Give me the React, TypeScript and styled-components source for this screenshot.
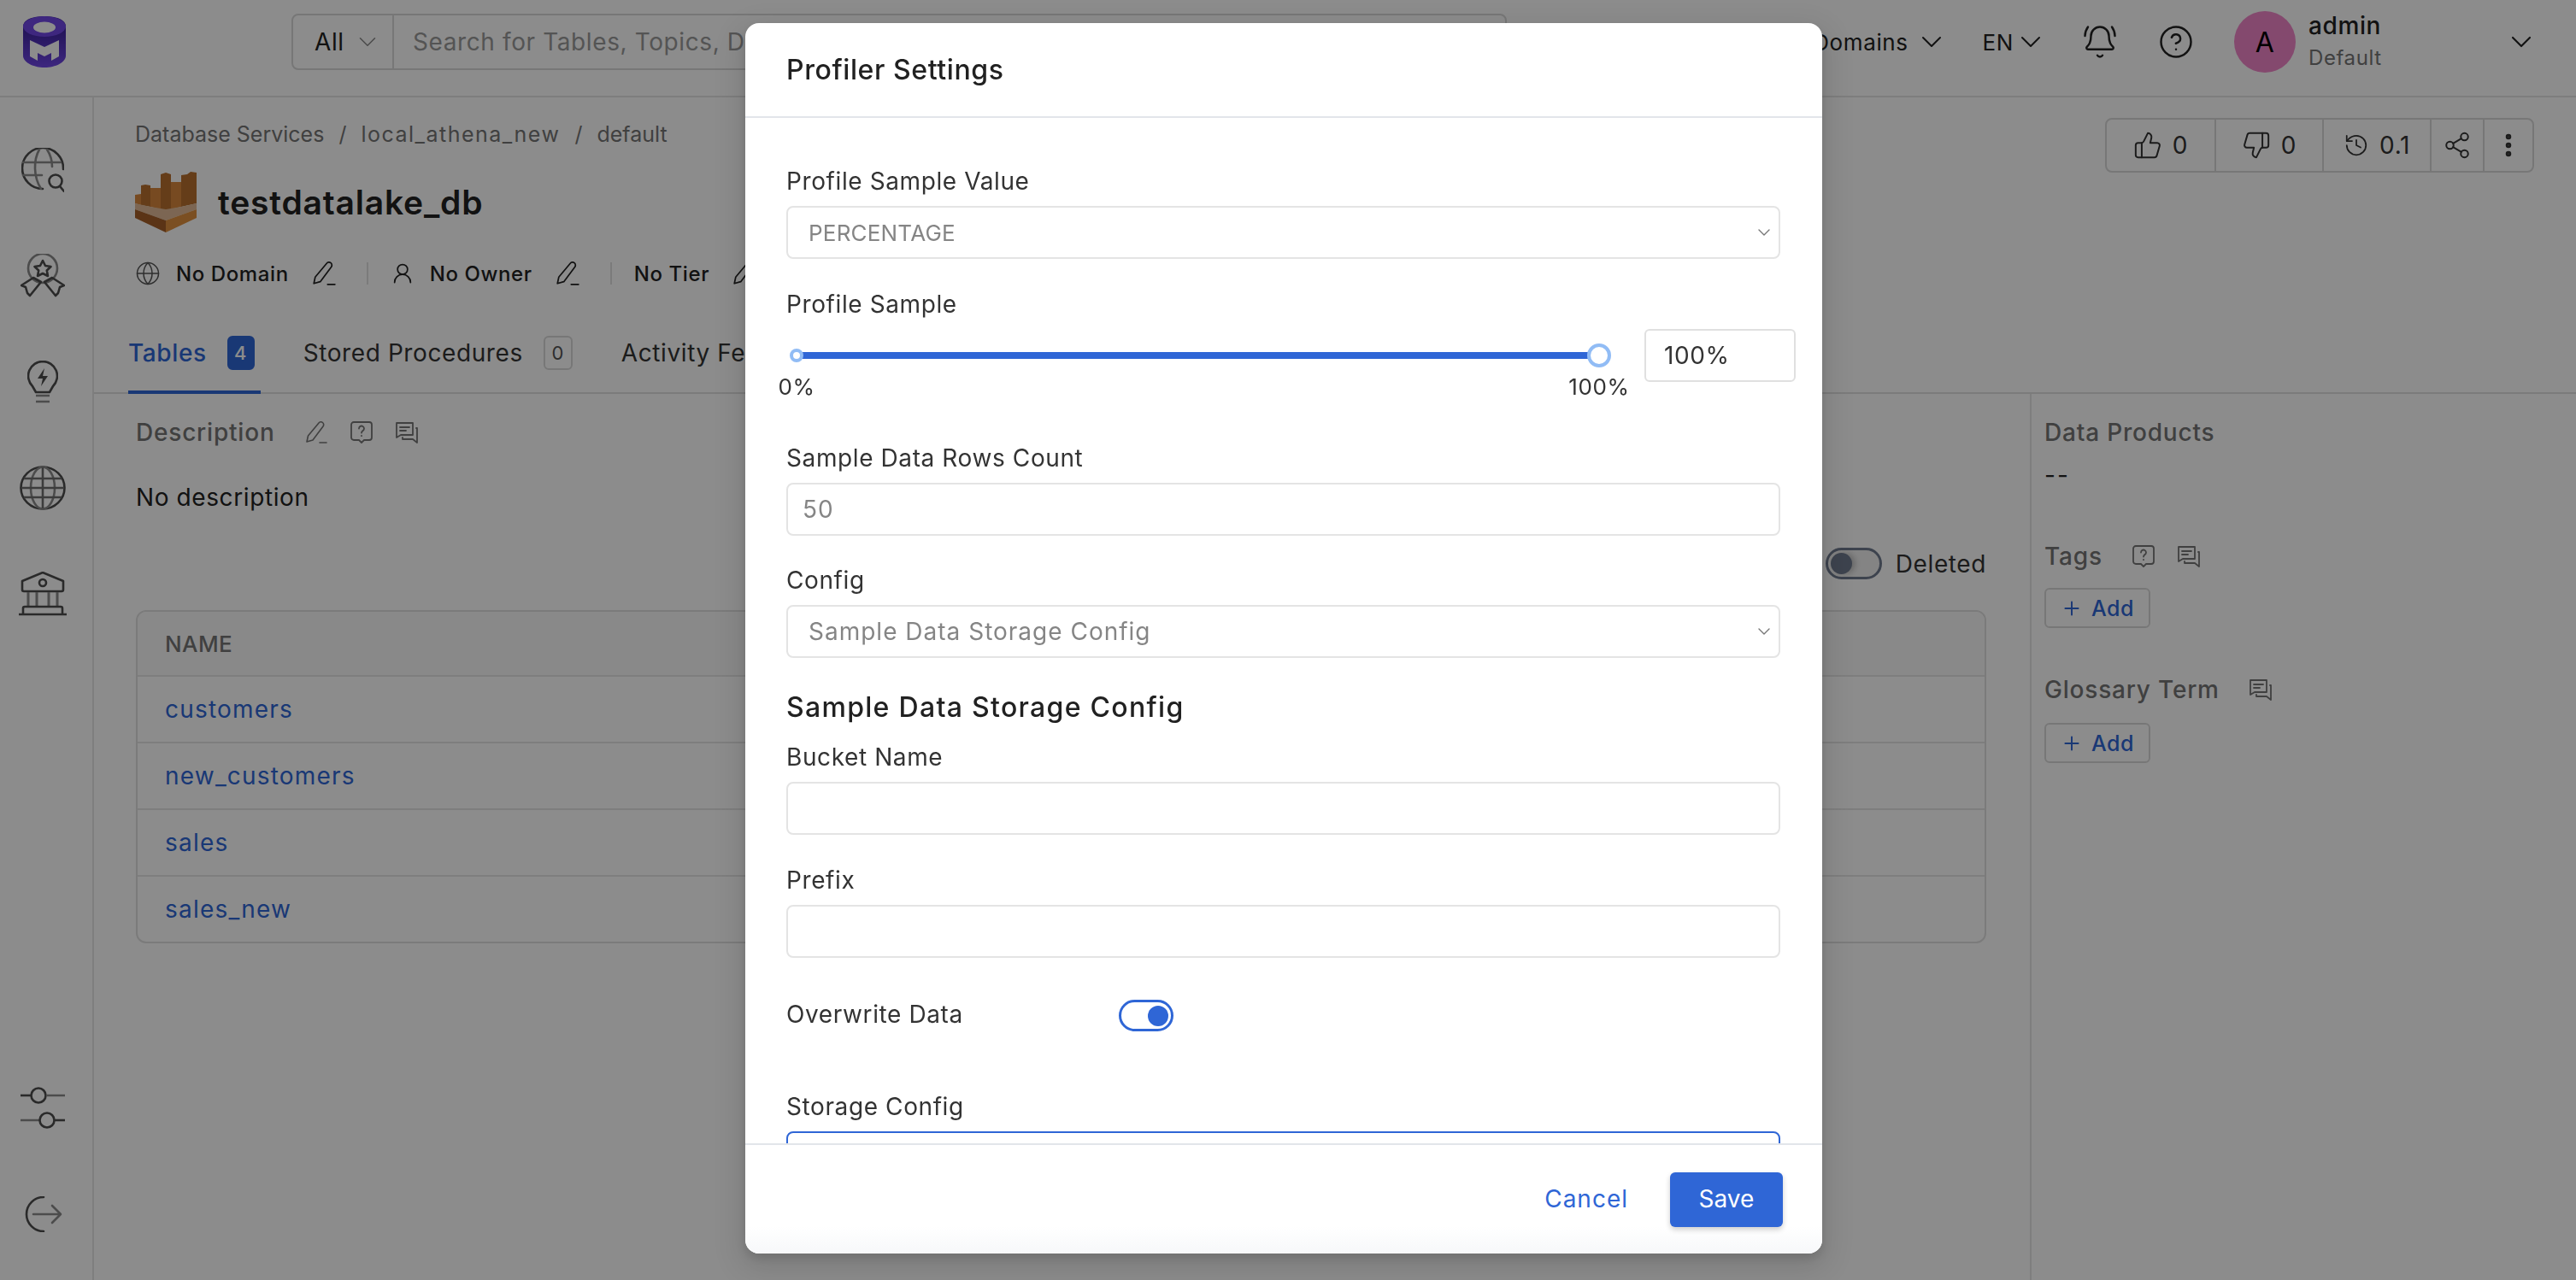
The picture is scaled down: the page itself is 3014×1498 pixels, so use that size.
import React from 'react';
import styled, {createGlobalStyle} from 'styled-components';
import {
  BellRing, ChevronDown, CircleHelp, EllipsisVertical, Globe, History, Plus, Share2, ThumbsDown, ThumbsUp, UserRound,
} from 'lucide-react';

const Global = createGlobalStyle`
  * { box-sizing: border-box; }
  html, body { margin: 0; height: 100%; }
  body {
    font-family: Inter, "Noto Sans", "Liberation Sans", sans-serif;
    font-size: 28px;
    letter-spacing: 0.6px;
    color: #212121;
    background: #fff;
    overflow: hidden;
  }
`;

const Page = styled.div`
  height: 1498px;
  display: flex;
  flex-direction: column;
`;

const Header = styled.header`
  height: 114px;
  flex: none;
  display: flex;
  align-items: center;
  padding: 0 44px 14px 27px;
  border-bottom: 2px solid #e6e6e6;
`;

const Search = styled.div`
  width: 1422px;
  height: 66px;
  margin-left: 264px;
  display: flex;
  align-items: center;
  border: 2px solid #d9d9d9;
  border-radius: 8px;
  > .scope {
    width: 118px;
    height: 100%;
    display: flex;
    align-items: center;
    gap: 10px;
    padding-left: 25px;
    border-right: 2px solid #d9d9d9;
  }
  > .placeholder {
    padding-left: 22px;
    color: #9a9a9a;
    white-space: nowrap;
  }
`;

const HeaderRight = styled.div`
  margin-left: auto;
  display: flex;
  align-items: center;
  gap: 40px;
`;

const HeaderMenu = styled.div<{$gap: number}>`
  display: flex;
  align-items: center;
  gap: ${p => p.$gap}px;
  font-size: 26px;
`;

const HeaderIcon = styled.span`
  width: 42px;
  height: 42px;
  margin-right: 7px;
  display: flex;
`;

const User = styled.div`
  width: 356px;
  display: flex;
  align-items: center;
  gap: 15px;
  > .chev { margin-left: auto; }
`;

const Avatar = styled.div`
  width: 72px;
  height: 72px;
  border-radius: 50%;
  background: #f085c8;
  color: #000;
  font-size: 32px;
  display: flex;
  align-items: center;
  justify-content: center;
`;

const UserName = styled.div`
  display: flex;
  flex-direction: column;
  gap: 4px;
  line-height: 34px;
  font-weight: 500;
  > small {
    font-size: 24px;
    font-weight: 400;
    color: #757575;
  }
`;

const Body = styled.div`
  flex: 1;
  display: flex;
  min-height: 0;
`;

const Sidebar = styled.nav`
  width: 110px;
  flex: none;
  display: flex;
  flex-direction: column;
  justify-content: space-between;
  padding: 23px 0 15px;
  border-right: 2px solid #e6e6e6;
`;

const SideGroup = styled.div`
  display: flex;
  flex-direction: column;
`;

const SideSlot = styled.div`
  height: 124px;
  display: flex;
  align-items: center;
  justify-content: center;
  padding-right: 8px;
`;

const Main = styled.main`
  flex: 1;
  min-width: 0;
  display: flex;
  flex-direction: column;
`;

const EntityHeader = styled.div`
  display: flex;
  justify-content: space-between;
  align-items: flex-start;
  padding: 25px 49px 0 48px;
`;

const Breadcrumb = styled.div`
  height: 36px;
  display: flex;
  align-items: center;
  gap: 17px;
  font-size: 25px;
  color: #757575;
  letter-spacing: 0;
`;

const Crumb = styled.span<{$wide?: boolean}>`
  letter-spacing: ${p => (p.$wide ? 1.5 : 0)}px;
`;

const TitleRow = styled.div`
  margin-top: 25px;
  display: flex;
  align-items: center;
  gap: 25px;
  height: 72px;
  > h1 {
    margin: 0;
    font-size: 39px;
    font-weight: 600;
    letter-spacing: 0.8px;
  }
`;

const MetaRow = styled.div`
  margin-top: 30px;
  height: 36px;
  display: flex;
  align-items: center;
  font-size: 24px;
  font-weight: 500;
`;

const MetaItem = styled.div`
  display: flex;
  align-items: center;
  gap: 18px;
  & + &::before {
    content: '';
    width: 2px;
    height: 26px;
    margin: 0 8px 0 35px;
    background: #e0e0e0;
  }
  > .edit { margin-left: 8px; display: flex; }
`;

const ActionGroup = styled.div`
  margin-top: -1px;
  height: 64px;
  display: flex;
  border: 2px solid #d9d9d9;
  border-radius: 8px;
  color: #333;
`;

const Action = styled.div<{$w: number}>`
  width: ${p => p.$w}px;
  display: flex;
  align-items: center;
  justify-content: center;
  gap: 12px;
  font-size: 28px;
  & + & { border-left: 2px solid #d9d9d9; }
`;

const TabBar = styled.div`
  margin-top: 28px;
  height: 95px;
  display: flex;
  gap: 50px;
  padding-left: 40px;
  border-bottom: 2px solid #e0e0e0;
`;

const Tab = styled.div<{$active?: boolean}>`
  display: flex;
  align-items: center;
  gap: 24px;
  padding: 2px 7px 0 0;
  margin-bottom: -2px;
  color: ${p => (p.$active ? '#2f66d6' : '#333')};
  font-weight: ${p => (p.$active ? 500 : 400)};
  border-bottom: 4px solid ${p => (p.$active ? '#2f66d6' : 'transparent')};
`;

const TabCount = styled.span<{$active?: boolean}>`
  width: ${p => (p.$active ? 32 : 34)}px;
  height: 40px;
  display: flex;
  align-items: center;
  justify-content: center;
  border-radius: 6px;
  font-size: 22px;
  color: ${p => (p.$active ? '#fff' : '#555')};
  background: ${p => (p.$active ? '#2f66d6' : 'transparent')};
  border: 2px solid ${p => (p.$active ? '#2f66d6' : '#d9d9d9')};
`;

const Content = styled.div`
  flex: 1;
  display: flex;
  min-height: 0;
`;

const Left = styled.section`
  flex: 1;
  min-width: 0;
  padding: 27px 51px 0 49px;
`;

const SectionTitle = styled.div`
  height: 36px;
  display: flex;
  align-items: center;
  color: #757575;
  font-weight: 500;
  font-size: 28px;
  letter-spacing: 0.8px;
`;

const TitleIcons = styled.span<{$offset: number}>`
  margin-left: ${p => p.$offset}px;
  display: flex;
  gap: 25px;
  color: #757575;
`;

const Paragraph = styled.div`
  margin-top: 40px;
  height: 36px;
  line-height: 36px;
`;

const DeletedRow = styled.div`
  margin-top: 41px;
  display: flex;
  justify-content: flex-end;
  align-items: center;
  gap: 16px;
  color: #333;
`;

const DeletedSwitch = styled.div`
  width: 66px;
  height: 37px;
  padding: 3px;
  border: 3px solid #6f7a8f;
  border-radius: 19px;
  background: #f0f0f0;
  > i {
    display: block;
    width: 25px;
    height: 25px;
    border-radius: 50%;
    background: #6f7a8f;
    box-shadow: 4px 0 6px rgba(0, 0, 0, 0.2);
  }
`;

const Table = styled.div`
  margin-top: 36px;
  border: 2px solid #e0e0e0;
  border-radius: 12px;
  overflow: hidden;
`;

const TableRow = styled.div<{$head?: boolean}>`
  height: ${p => (p.$head ? 74 : 78)}px;
  display: flex;
  align-items: center;
  padding-left: 32px;
  letter-spacing: ${p => (p.$head ? 0.4 : 1.2)}px;
  color: ${p => (p.$head ? '#757575' : '#2f66d6')};
  background: ${p => (p.$head ? '#fafafa' : 'transparent')};
  font-weight: ${p => (p.$head ? 500 : 400)};
  font-size: ${p => (p.$head ? 26 : 28)}px;
  & + & { border-top: 2px solid #e6e6e6; }
`;

const Aside = styled.aside`
  width: 639px;
  flex: none;
  padding: 27px 0 0 15px;
  border-left: 2px solid #e6e6e6;
`;

const AsideValue = styled.div<{$below: number}>`
  margin: 14px 0 ${p => p.$below}px;
  height: 36px;
  line-height: 36px;
  letter-spacing: 2px;
`;

const AddButton = styled.div<{$top: number; $below?: number}>`
  margin: ${p => p.$top}px 0 ${p => p.$below || 0}px;
  width: 124px;
  height: 47px;
  display: flex;
  align-items: center;
  justify-content: center;
  gap: 10px;
  border: 2px solid #d9d9d9;
  border-radius: 6px;
  color: #2f66d6;
  font-size: 25px;
  font-weight: 500;
`;

const Overlay = styled.div`
  position: fixed;
  inset: 0;
  background: rgba(0, 0, 0, 0.45);
`;

const Modal = styled.div`
  position: absolute;
  left: 872px;
  top: 27px;
  width: 1260px;
  height: 1440px;
  display: flex;
  flex-direction: column;
  background: #fff;
  border-radius: 16px;
  overflow: hidden;
  box-shadow: 0 12px 32px 8px rgba(0, 0, 0, 0.1), 0 6px 12px rgba(0, 0, 0, 0.12);
`;

const ModalHeader = styled.div`
  flex: none;
  height: 111px;
  display: flex;
  align-items: center;
  padding-left: 48px;
  border-bottom: 2px solid #e2e5ea;
  font-size: 32px;
  font-weight: 500;
`;

const ModalBody = styled.div`
  flex: 1;
  min-height: 0;
  overflow: hidden;
  padding: 53px 49px 0 48px;
`;

const Label = styled.div`
  height: 42px;
  line-height: 42px;
  margin-bottom: 8px;
  color: #333;
`;

const Field = styled.div<{$below?: number}>`
  margin-bottom: ${p => p.$below ?? 32}px;
`;

const Control = styled.div<{$focus?: boolean; $muted?: boolean; $pad?: number; $caps?: boolean}>`
  height: 62px;
  display: flex;
  align-items: center;
  justify-content: space-between;
  padding: 0 5px 0 ${p => p.$pad ?? 24}px;
  background: #fff;
  border: 2px solid ${p => (p.$focus ? '#2f66d6' : '#e4e4e4')};
  border-radius: 8px;
  color: ${p => (p.$muted ? '#858585' : '#333')};
  font-size: ${p => (p.$caps ? 26 : 28)}px;
  letter-spacing: ${p => (p.$caps ? 0.2 : 1)}px;
`;

const SliderRow = styled.div`
  display: flex;
  align-items: flex-start;
  margin-right: -18px;
`;

const Slider = styled.div`
  position: relative;
  width: 939px;
  height: 62px;
  margin: 0 53px 0 12px;
  flex: none;
`;

const Track = styled.div`
  position: absolute;
  left: 0;
  right: 0;
  top: 27px;
  height: 8px;
  background: #2f66d6;
`;

const Handle = styled.span<{$size: number; $left: string}>`
  position: absolute;
  top: ${p => 31 - p.$size / 2}px;
  left: ${p => p.$left};
  width: ${p => p.$size}px;
  height: ${p => p.$size}px;
  margin-left: ${p => -p.$size / 2}px;
  background: #fff;
  border: 4px solid #91bcf5;
  border-radius: 50%;
`;

const Mark = styled.span<{$left: string}>`
  position: absolute;
  top: 50px;
  left: ${p => p.$left};
  transform: translateX(-50%);
  font-size: 26px;
  line-height: 36px;
  color: #333;
`;

const PercentBox = styled.div`
  width: 177px;
  height: 62px;
  display: flex;
  align-items: center;
  padding-left: 21px;
  border: 2px solid #e0e0e0;
  border-radius: 6px;
  color: #333;
`;

const FormHeading = styled.div`
  height: 46px;
  line-height: 46px;
  margin: 35px 0 14px;
  font-size: 32px;
  font-weight: 500;
  letter-spacing: 1.3px;
`;

const SwitchRow = styled.div`
  height: 37px;
  margin: 49px 0 67px;
  display: flex;
  align-items: center;
  color: #333;
  > span { width: 389px; margin-top: -3px; }
`;

const Switch = styled.div`
  width: 64px;
  height: 37px;
  display: flex;
  justify-content: flex-end;
  align-items: center;
  padding-right: 3px;
  border: 3px solid #2f66d6;
  border-radius: 19px;
  > i {
    width: 24px;
    height: 24px;
    border-radius: 50%;
    background: #2f66d6;
  }
`;

const ModalFooter = styled.div`
  flex: none;
  height: 129px;
  display: flex;
  align-items: center;
  justify-content: flex-end;
  gap: 49px;
  padding-right: 46px;
  border-top: 2px solid #e2e5ea;
  background: linear-gradient(#fff 75%, #f7f8fa);
`;

const CancelButton = styled.button`
  padding: 0 0 2px;
  border: 0;
  background: none;
  font: inherit;
  letter-spacing: 1px;
  color: #2f66d6;
`;

const SaveButton = styled.button`
  width: 132px;
  height: 64px;
  padding: 0 0 2px;
  border: 0;
  border-radius: 6px;
  background: #2f66d6;
  color: #fff;
  font: inherit;
  box-shadow: 0 3px 6px rgba(0, 0, 0, 0.2);
`;

const Logo = () => (
  <svg width="50" height="60" viewBox="0 0 50 60">
    <defs>
      <linearGradient id="logoBody" x1="0" y1="0" x2="0" y2="1">
        <stop offset="0.25" stopColor="#3f25a0"/>
        <stop offset="1" stopColor="#7147e8"/>
      </linearGradient>
    </defs>
    <path d="M0 12C0 4 11 0 25 0s25 4 25 12v34c0 8-12 14-25 14S0 54 0 46z" fill="url(#logoBody)"/>
    <ellipse cx="25" cy="12" rx="25" ry="12" fill="#7147e8"/>
    <ellipse cx="25" cy="13" rx="13" ry="6.500" fill="#fff"/>
    <path d="M8 28l17 8 17-8v19l-9 5v-9l-8 4-8-4v9l-9-5z" fill="#fff"/>
  </svg>
);

const Athena = () => (
  <svg width="72" height="72" viewBox="0 0 72 72">
    <path d="M0 28l7-1v13l-7-2z" fill="#d9873c"/>
    <path d="M7 17l5-1 6 1v25l-11-2z" fill="#b8702e"/>
    <path d="M18 20h12v25l-12-3z" fill="#d9873c"/>
    <path d="M30 4l6-2 6 2v41H30z" fill="#b8702e"/>
    <path d="M42 13h12v29l-12 3z" fill="#d9873c"/>
    <path d="M54 5l7-1 4-3 7 1v36l-18 4z" fill="#b8702e"/>
    <path d="M0 38l18 4 18 3 18-3 18-4v7L36 58 0 45z" fill="#e2bb97"/>
    <path d="M0 45l36 13v14L0 55z" fill="#a65f28"/>
    <path d="M72 45L36 58v14l36-17z" fill="#e0913f"/>
  </svg>
);

const Pencil = ({size = 30}: {size?: number}) => (
  <svg width={size} height={size} viewBox="0 0 28 28" fill="none" stroke="currentColor" strokeWidth="1.600" strokeLinejoin="round" strokeLinecap="round">
    <path d="M3 25l1.500-7L17 3a3 3 0 0 1 5 4L10 23z"/>
    <path d="M18 26h8"/>
  </svg>
);

const AskBubble = () => (
  <svg width="28" height="28" viewBox="0 0 28 28" fill="none" stroke="currentColor" strokeWidth="1.800" strokeLinecap="round" strokeLinejoin="round">
    <path d="M5 2h18a3 3 0 0 1 3 3v15a3 3 0 0 1-3 3h-6l-3 3-3-3H5a3 3 0 0 1-3-3V5a3 3 0 0 1 3-3z"/>
    <path d="M11 9.500a3 3 0 1 1 4.500 2.600c-1 .6-1.500 1.200-1.500 2.400"/>
    <path d="M14 18v.2"/>
  </svg>
);

const Chat = () => (
  <svg width="28" height="28" viewBox="0 0 28 28" fill="none" stroke="currentColor" strokeWidth="1.800" strokeLinecap="round" strokeLinejoin="round">
    <path d="M2 3h19v14H7l-5 3z"/>
    <path d="M6 8h11M6 12h7"/>
    <path d="M25 9h1v17l-5-4H9v-2"/>
  </svg>
);

const IconExplore = () => (
  <svg width="50" height="52" viewBox="0 0 50 52" fill="none" stroke="#4d4d4d" strokeWidth="2.600" strokeLinecap="round">
    <path d="M49 25A24 24 0 1 0 25 48"/>
    <path d="M2 17h44M2 32h22M21 2c-7 12-7 32 2 46M30 2c4 6 6 12 6 20" stroke="#8a8a8a"/>
    <circle cx="40" cy="39" r="7.500"/>
    <path d="M45 45l5 6"/>
  </svg>
);

const IconBadge = () => (
  <svg width="52" height="52" viewBox="0 0 52 52" fill="none" stroke="#4d4d4d" strokeWidth="2.600" strokeLinejoin="round">
    <circle cx="26" cy="17" r="17" stroke="#8a8a8a"/>
    <path d="M26 8l3 6 6.500 1-4.700 4.500 1.200 6.500-6-3-6 3 1.200-6.500L16.500 15l6.500-1z"/>
    <path d="M15 28L1 37l5 2 2 7 3 3 13-16zM37 28l14 9-5 2-2 7-3 3-13-16z"/>
  </svg>
);

const IconInsight = () => (
  <svg width="36" height="50" viewBox="0 0 36 50" fill="none" stroke="#4d4d4d" strokeWidth="2.600" strokeLinejoin="round">
    <path d="M18 1a17 17 0 0 0-12 29l4 7h16l4-7A17 17 0 0 0 18 1z"/>
    <path d="M20 9l-8 12h6l-2 9 8-12h-6z" fill="#4d4d4d" stroke="none"/>
    <path d="M10 41h16M10 48h16" stroke="#8a8a8a"/>
  </svg>
);

const IconDomain = () => (
  <svg width="54" height="52" viewBox="0 0 54 52" fill="none" stroke="#4d4d4d" strokeWidth="2.600">
    <ellipse cx="27" cy="26" rx="25.500" ry="24.500"/>
    <ellipse cx="27" cy="26" rx="14" ry="24.500" stroke="#8a8a8a"/>
    <path d="M27 2v48M2 26h50M5 15h44M5 37h44" stroke="#6e6e6e"/>
  </svg>
);

const IconGovern = () => (
  <svg width="56" height="52" viewBox="0 0 56 52" fill="none" stroke="#4d4d4d" strokeWidth="2.600" strokeLinejoin="round">
    <path d="M28 1L4 11v10a2 2 0 0 0 2 2h44a2 2 0 0 0 2-2V11z"/>
    <circle cx="28" cy="13" r="4"/>
    <path d="M11 24v16M21 24v16M35 24v16M45 24v16" stroke="#8a8a8a" strokeWidth="3"/>
    <path d="M5 50v-7a2 2 0 0 1 2-2h42a2 2 0 0 1 2 2v7M0 50h56"/>
  </svg>
);

const IconSettings = () => (
  <svg width="54" height="50" viewBox="0 0 54 50" fill="none" strokeWidth="2.600">
    <path d="M1 10h13" stroke="#4d4d4d"/>
    <circle cx="22" cy="10" r="8.500" stroke="#4d4d4d"/>
    <path d="M31 10h22M1 39h22" stroke="#8a8a8a"/>
    <circle cx="32" cy="39" r="8.500" stroke="#4d4d4d"/>
    <path d="M41 39h12" stroke="#4d4d4d"/>
  </svg>
);

const IconLogout = () => (
  <svg width="46" height="42" viewBox="0 0 46 42" fill="none" strokeWidth="2.600" strokeLinecap="round" strokeLinejoin="round">
    <path d="M24 1A20 20 0 0 0 24 41" stroke="#4d4d4d"/>
    <path d="M12 21h32M34 11l10 10-10 10" stroke="#8a8a8a"/>
  </svg>
);

const sideTop = [IconExplore, IconBadge, IconInsight, IconDomain, IconGovern];
const sideBottom = [IconSettings, IconLogout];
const tables = ['customers', 'new_customers', 'sales', 'sales_new'];

const App: React.FC = () => {
  return (
    <Page>
      <Global/>
      <Header>
        <Logo/>
        <Search>
          <div className="scope">All <ChevronDown size={34} strokeWidth={1.100} color="#8a8a8a"/></div>
          <div className="placeholder">Search for Tables, Topics, Dashboards, Pipelines and ML Models</div>
        </Search>
        <HeaderRight>
          <HeaderMenu $gap={7}>All Domains <ChevronDown size={40} strokeWidth={1.200}/></HeaderMenu>
          <HeaderMenu $gap={0}>EN <ChevronDown size={40} strokeWidth={1.200}/></HeaderMenu>
          <HeaderIcon><BellRing size={42} strokeWidth={1.400}/></HeaderIcon>
          <HeaderIcon><CircleHelp size={42} strokeWidth={1.400}/></HeaderIcon>
          <User>
            <Avatar>A</Avatar>
            <UserName>admin<small>Default</small></UserName>
            <ChevronDown className="chev" size={40} strokeWidth={1.300}/>
          </User>
        </HeaderRight>
      </Header>
      <Body>
        <Sidebar>
          <SideGroup>
            {sideTop.map((Icon, i) => <SideSlot key={i}><Icon/></SideSlot>)}
          </SideGroup>
          <SideGroup>
            {sideBottom.map((Icon, i) => <SideSlot key={i}><Icon/></SideSlot>)}
          </SideGroup>
        </Sidebar>
        <Main>
          <EntityHeader>
            <div>
              <Breadcrumb>
                <Crumb>Database Services</Crumb><span>/</span>
                <Crumb $wide>local_athena_new</Crumb><span>/</span>
                <Crumb>default</Crumb>
              </Breadcrumb>
              <TitleRow>
                <Athena/>
                <h1>testdatalake_db</h1>
              </TitleRow>
              <MetaRow>
                <MetaItem><Globe size={30} strokeWidth={1.200} color="#555"/>No Domain<span className="edit"><Pencil/></span></MetaItem>
                <MetaItem><UserRound size={28} strokeWidth={1.500}/>No Owner<span className="edit"><Pencil/></span></MetaItem>
                <MetaItem>No Tier<span className="edit"><Pencil/></span></MetaItem>
              </MetaRow>
            </div>
            <ActionGroup>
              <Action $w={126}><ThumbsUp size={34} strokeWidth={1.400}/>0</Action>
              <Action $w={126}><ThumbsDown size={34} strokeWidth={1.400}/>0</Action>
              <Action $w={126}><History size={30} strokeWidth={1.400}/>0.1</Action>
              <Action $w={62}><Share2 size={34} strokeWidth={1.400}/></Action>
              <Action $w={58}><EllipsisVertical size={34} strokeWidth={2.600}/></Action>
            </ActionGroup>
          </EntityHeader>
          <TabBar>
            <Tab $active>Tables <TabCount $active>4</TabCount></Tab>
            <Tab>Stored Procedures <TabCount>0</TabCount></Tab>
            <Tab>Activity Feeds &amp; Tasks <TabCount>0</TabCount></Tab>
          </TabBar>
          <Content>
            <Left>
              <SectionTitle>
                Description
                <TitleIcons $offset={34}><Pencil size={28}/><AskBubble/><Chat/></TitleIcons>
              </SectionTitle>
              <Paragraph>No description</Paragraph>
              <DeletedRow><DeletedSwitch><i/></DeletedSwitch>Deleted</DeletedRow>
              <Table>
                <TableRow $head>NAME</TableRow>
                {tables.map(t => <TableRow key={t}>{t}</TableRow>)}
              </Table>
            </Left>
            <Aside>
              <SectionTitle>Data Products</SectionTitle>
              <AsideValue $below={59}>--</AsideValue>
              <SectionTitle>
                Tags
                <TitleIcons $offset={34}><AskBubble/><Chat/></TitleIcons>
              </SectionTitle>
              <AddButton $top={19} $below={54}><Plus size={26} strokeWidth={1.800}/>Add</AddButton>
              <SectionTitle>
                Glossary Term
                <TitleIcons $offset={34}><Chat/></TitleIcons>
              </SectionTitle>
              <AddButton $top={21}><Plus size={26} strokeWidth={1.800}/>Add</AddButton>
            </Aside>
          </Content>
        </Main>
      </Body>
      <Overlay/>
      <Modal>
        <ModalHeader>Profiler Settings</ModalHeader>
        <ModalBody>
          <Field>
            <Label>Profile Sample Value</Label>
            <Control $muted $caps>PERCENTAGE <ChevronDown size={24} strokeWidth={1.400} color="#777"/></Control>
          </Field>
          <Field $below={68}>
            <Label>Profile Sample</Label>
            <SliderRow>
              <Slider>
                <Track/>
                <Handle $size={16} $left="0%"/>
                <Handle $size={28} $left="100%"/>
                <Mark $left="0%">0%</Mark>
                <Mark $left="100%">100%</Mark>
              </Slider>
              <PercentBox>100%</PercentBox>
            </SliderRow>
          </Field>
          <Field $below={31}>
            <Label>Sample Data Rows Count</Label>
            <Control $muted $pad={17}>50</Control>
          </Field>
          <Field $below={0}>
            <Label>Config</Label>
            <Control $muted>Sample Data Storage Config <ChevronDown size={24} strokeWidth={1.400} color="#777"/></Control>
          </Field>
          <FormHeading>Sample Data Storage Config</FormHeading>
          <Field>
            <Label>Bucket Name</Label>
            <Control/>
          </Field>
          <Field $below={0}>
            <Label>Prefix</Label>
            <Control/>
          </Field>
          <SwitchRow>
            <span>Overwrite Data</span>
            <Switch><i/></Switch>
          </SwitchRow>
          <Field>
            <Label>Storage Config</Label>
            <Control $focus/>
          </Field>
        </ModalBody>
        <ModalFooter>
          <CancelButton>Cancel</CancelButton>
          <SaveButton>Save</SaveButton>
        </ModalFooter>
      </Modal>
    </Page>
  );
};

export default App;
